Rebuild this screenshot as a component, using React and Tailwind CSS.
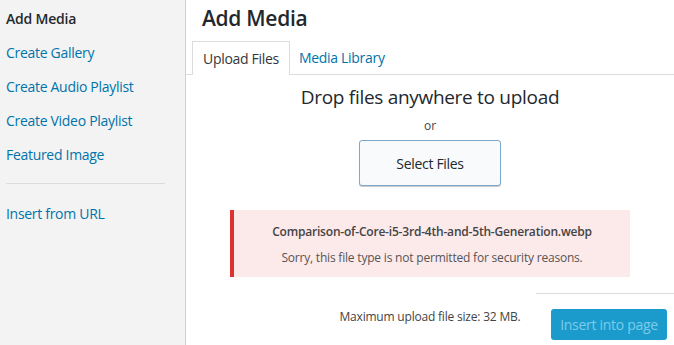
export default function App() {
  const font = { fontFamily: '"Open Sans", "Noto Sans", sans-serif' };
  return (
    <div className="flex w-[674px] h-[345px] overflow-hidden bg-white text-[#444]" style={font}>
      <aside className="w-[186px] shrink-0 h-full bg-[#f3f3f4] border-r border-[#cfcfcf] pt-[1px]">
        <div className="px-[6px] h-[34px] flex items-center text-[14px] font-semibold text-[#23282d] tracking-[-0.2px]">Add Media</div>
        <div className="px-[6px] h-[34px] flex items-center text-[14px] text-[#0073aa] tracking-[-0.3px]">Create Gallery</div>
        <div className="px-[6px] h-[34px] flex items-center text-[14px] text-[#0073aa] tracking-[-0.3px]">Create Audio Playlist</div>
        <div className="px-[6px] h-[34px] flex items-center text-[14px] text-[#0073aa] tracking-[-0.3px]">Create Video Playlist</div>
        <div className="px-[6px] h-[34px] flex items-center text-[14px] text-[#0073aa] tracking-[-0.3px]">Featured Image</div>
        <div className="ml-[6px] w-[159px] h-[1px] bg-[#dcdcdc] my-[12px]"></div>
        <div className="px-[6px] h-[34px] flex items-center text-[14px] text-[#0073aa] tracking-[-0.3px]">Insert from URL</div>
      </aside>
      <main className="flex-1 flex flex-col min-w-0">
        <div className="h-[41px] pl-[16px] pt-[3px] text-[21px] font-semibold text-[#23282d] leading-[30px] tracking-[-0.3px]">Add Media</div>
        <div className="flex h-[34px] border-b border-[#dcdcdc] pl-[6px]">
          <div className="h-[34px] px-[10px] flex items-center bg-white border border-b-0 border-[#dcdcdc] text-[14px] text-[#32373c] tracking-[-0.3px]">Upload Files</div>
          <div className="h-[33px] px-[9px] flex items-center text-[14px] text-[#0073aa] tracking-[-0.3px]">Media Library</div>
        </div>
        <div className="flex flex-col items-center pt-[8px]">
          <div className="h-[28px] leading-[28px] text-[19px] text-[#23282d] tracking-[-0.3px]">Drop files anywhere to upload</div>
          <div className="mt-[6px] h-[18px] leading-[18px] text-[12px] text-[#444]">or</div>
          <div className="mt-[5px] w-[142px] h-[46px] flex items-center justify-center rounded-[3px] border border-[#7fa7c9] bg-[#f8fafb] shadow-[0_1px_0_#ccc] text-[14px] text-[#23282d] tracking-[-0.3px]">Select Files</div>
          <div className="mt-[24px] w-[400px] border-l-4 border-[#dc3232] bg-[#fce9ea] pt-[13px] pb-[10px] flex flex-col items-center">
            <div className="h-[18px] leading-[18px] text-[12px] font-semibold text-[#444] tracking-[-0.2px]">Comparison-of-Core-i5-3rd-4th-and-5th-Generation.webp</div>
            <div className="mt-[8px] h-[18px] leading-[18px] text-[12px] text-[#555] tracking-[-0.2px]">Sorry, this file type is not permitted for security reasons.</div>
          </div>
        </div>
        <div className="grid flex-1">
          <div className="col-start-1 row-start-1 justify-self-center mt-[31px] h-[18px] leading-[18px] text-[12px] text-[#444] tracking-[-0.2px]">Maximum upload file size: 32 MB.</div>
          <div className="col-start-1 row-start-1 justify-self-end w-[138px] mt-[16px] border-t border-[#dcdcdc] flex justify-end pr-[7px]">
            <div className="mt-[15px] w-[116px] h-[31px] rounded-[3px] bg-[#1b9bcb] flex items-center justify-center text-[14px] text-[#7ccbeb] tracking-[-0.3px]">Insert into page</div>
          </div>
        </div>
      </main>
    </div>
  );
}
